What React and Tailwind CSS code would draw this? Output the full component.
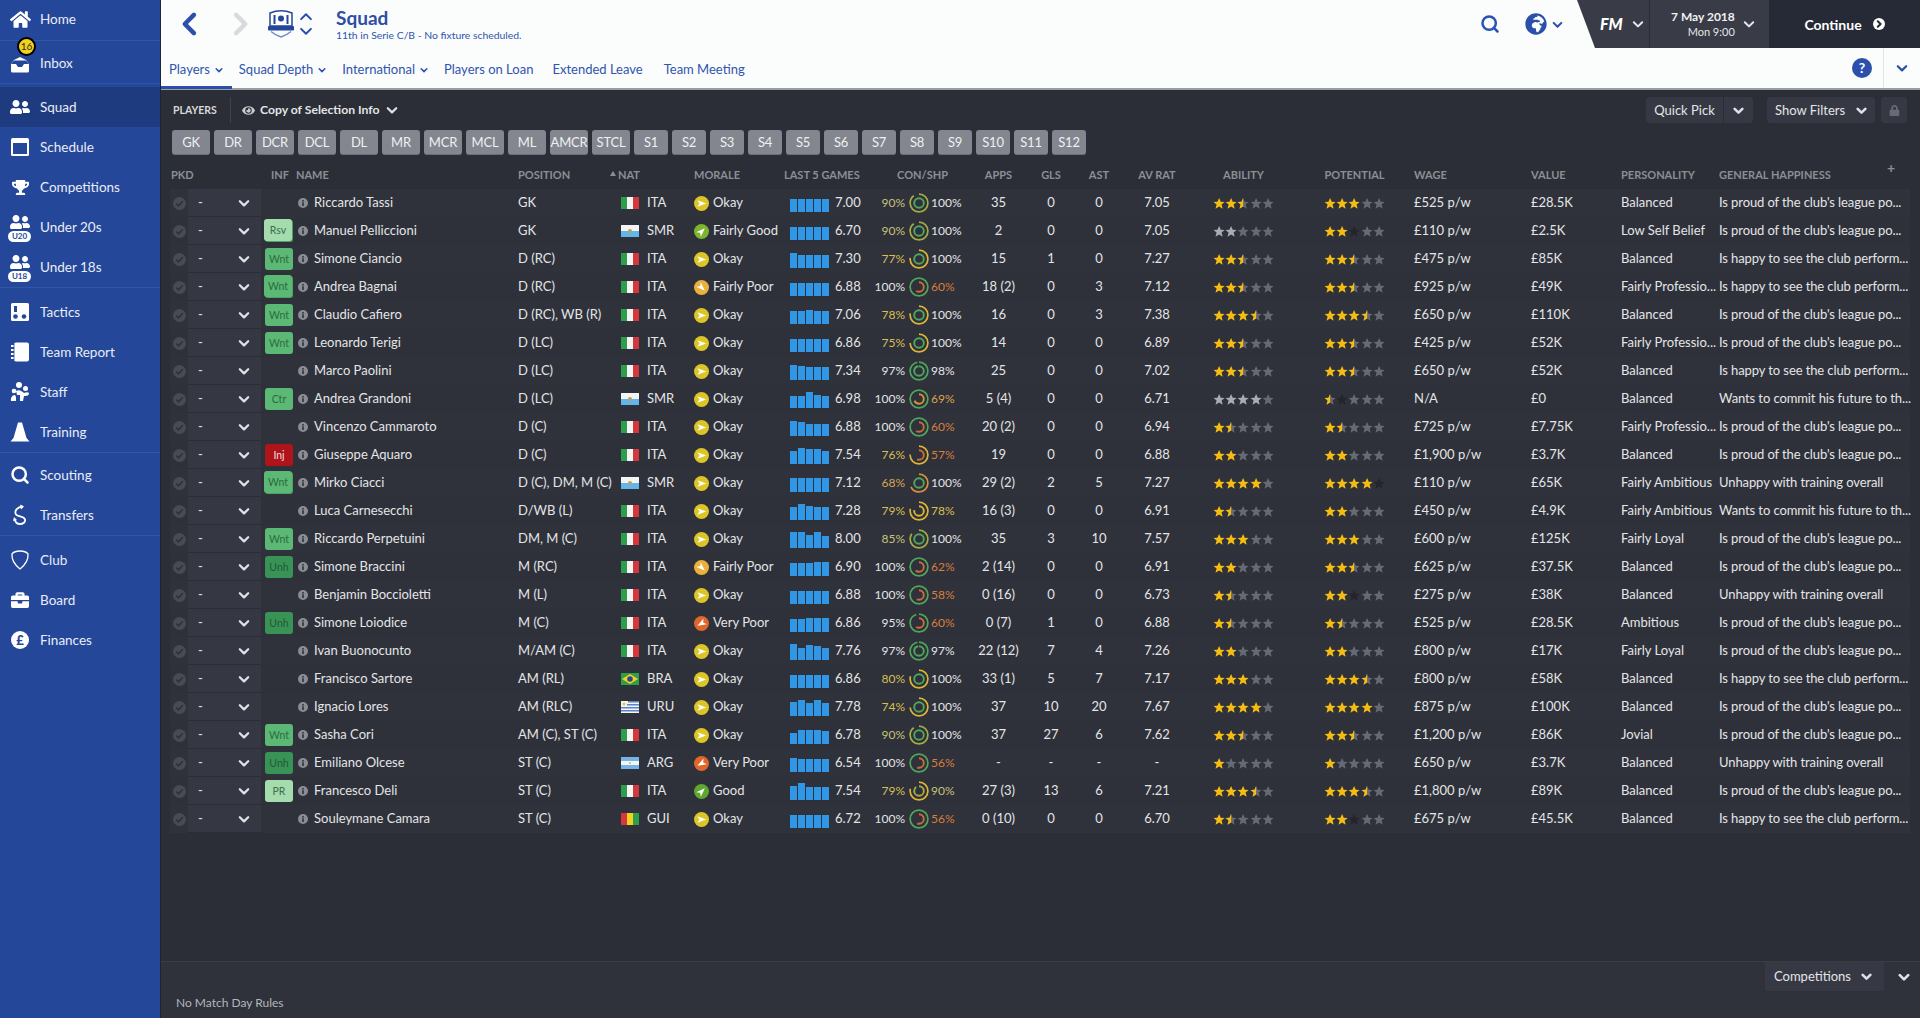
import React from 'react'
import { FaHome, FaUserFriends, FaTrophy, FaBriefcase, FaEye, FaLock, FaGlobeAfrica } from 'react-icons/fa'
import { Search } from 'lucide-react'

const GRID = 'grid grid-cols-[18px_73px_35px_14px_208px_103px_73px_96px_45px_35px_35px_28px_42px_47px_58px_38px_84px_98px_114px_117px_90px_98px_191px]'

const PROUD = "Is proud of the club's league po..."
const HAPPY = 'Is happy to see the club perform...'
const WANTS = 'Wants to commit his future to th...'
const UNHAPPY = 'Unhappy with training overall'
const FP = 'Fairly Professio...'
const FA = 'Fairly Ambitious'

// inf, name, pos, nat, morale, bars, rating, con, shp, apps, gls, ast, avrat, ability, potential, wage, value, personality, happiness
const players = [
  ['', 'Riccardo Tassi', 'GK', 'ITA', 'Okay', [13,13,13,13,13], '7.00', 90, 100, '35', '0', '0', '7.05', { n: 2.5 }, { n: 3 }, '£525 p/w', '£28.5K', 'Balanced', PROUD],
  ['Rsv*', 'Manuel Pelliccioni', 'GK', 'SMR', 'Fairly Good', [13,13,13,13,13], '6.70', 90, 100, '2', '0', '0', '7.05', { n: 2, grey: true }, { n: 2, dark: [2] }, '£110 p/w', '£2.5K', 'Low Self Belief', PROUD],
  ['Wnt', 'Simone Ciancio', 'D (RC)', 'ITA', 'Okay', [15,13,13,13,13], '7.30', 77, 100, '15', '1', '0', '7.27', { n: 2.5 }, { n: 2.5 }, '£475 p/w', '£85K', 'Balanced', HAPPY],
  ['Wnt*', 'Andrea Bagnai', 'D (RC)', 'ITA', 'Fairly Poor', [13,13,13,13,13], '6.88', 100, 60, '18 (2)', '0', '3', '7.12', { n: 2.5 }, { n: 2.5 }, '£925 p/w', '£49K', FP, HAPPY],
  ['Wnt', 'Claudio Cafiero', 'D (RC), WB (R)', 'ITA', 'Okay', [13,13,14,13,13], '7.06', 78, 100, '16', '0', '3', '7.38', { n: 3.5 }, { n: 3.5 }, '£650 p/w', '£110K', 'Balanced', PROUD],
  ['Wnt', 'Leonardo Terigi', 'D (LC)', 'ITA', 'Okay', [13,13,13,13,13], '6.86', 75, 100, '14', '0', '0', '6.89', { n: 2.5 }, { n: 2.5 }, '£425 p/w', '£52K', FP, PROUD],
  ['', 'Marco Paolini', 'D (LC)', 'ITA', 'Okay', [15,14,13,13,13], '7.34', 97, 98, '25', '0', '0', '7.02', { n: 2.5 }, { n: 2.5 }, '£650 p/w', '£52K', 'Balanced', HAPPY],
  ['Ctr', 'Andrea Grandoni', 'D (LC)', 'SMR', 'Okay', [12,12,16,13,12], '6.98', 100, 69, '5 (4)', '0', '0', '6.71', { n: 4, grey: true }, { n: 0.5, dark: [1] }, 'N/A', '£0', 'Balanced', WANTS],
  ['', 'Vincenzo Cammaroto', 'D (C)', 'ITA', 'Okay', [15,14,12,12,12], '6.88', 100, 60, '20 (2)', '0', '0', '6.94', { n: 1.5 }, { n: 1.5 }, '£725 p/w', '£7.75K', FP, PROUD],
  ['Inj', 'Giuseppe Aquaro', 'D (C)', 'ITA', 'Okay', [13,16,15,15,13], '7.54', 76, 57, '19', '0', '0', '6.88', { n: 2 }, { n: 2 }, '£1,900 p/w', '£3.7K', 'Balanced', PROUD],
  ['Wnt*', 'Mirko Ciacci', 'D (C), DM, M (C)', 'SMR', 'Okay', [14,14,14,14,14], '7.12', 68, 100, '29 (2)', '2', '5', '7.27', { n: 4 }, { n: 4, dark: [4] }, '£110 p/w', '£65K', FA, UNHAPPY],
  ['', 'Luca Carnesecchi', 'D/WB (L)', 'ITA', 'Okay', [13,16,14,13,13], '7.28', 79, 78, '16 (3)', '0', '0', '6.91', { n: 1.5 }, { n: 2 }, '£450 p/w', '£4.9K', FA, WANTS],
  ['Wnt', 'Riccardo Perpetuini', 'DM, M (C)', 'ITA', 'Okay', [16,16,13,16,12], '8.00', 85, 100, '35', '3', '10', '7.57', { n: 3 }, { n: 3 }, '£600 p/w', '£125K', 'Fairly Loyal', PROUD],
  ['Unh', 'Simone Braccini', 'M (RC)', 'ITA', 'Fairly Poor', [13,13,13,14,14], '6.90', 100, 62, '2 (14)', '0', '0', '6.91', { n: 2 }, { n: 2.5 }, '£625 p/w', '£37.5K', 'Balanced', PROUD],
  ['', 'Benjamin Boccioletti', 'M (L)', 'ITA', 'Okay', [13,13,13,13,13], '6.88', 100, 58, '0 (16)', '0', '0', '6.73', { n: 1.5 }, { n: 2, dark: [2] }, '£275 p/w', '£38K', 'Balanced', UNHAPPY],
  ['Unh', 'Simone Loiodice', 'M (C)', 'ITA', 'Very Poor', [13,13,14,14,14], '6.86', 95, 60, '0 (7)', '1', '0', '6.88', { n: 1.5 }, { n: 1.5 }, '£525 p/w', '£28.5K', 'Ambitious', PROUD],
  ['', 'Ivan Buonocunto', 'M/AM (C)', 'ITA', 'Okay', [16,12,15,14,12], '7.76', 97, 97, '22 (12)', '7', '4', '7.26', { n: 2 }, { n: 2 }, '£800 p/w', '£17K', 'Fairly Loyal', PROUD],
  ['', 'Francisco Sartore', 'AM (RL)', 'BRA', 'Okay', [13,13,13,13,13], '6.86', 80, 100, '33 (1)', '5', '7', '7.17', { n: 3 }, { n: 3.5 }, '£800 p/w', '£58K', 'Balanced', HAPPY],
  ['', 'Ignacio Lores', 'AM (RLC)', 'URU', 'Okay', [14,16,13,16,13], '7.78', 74, 100, '37', '10', '20', '7.67', { n: 4 }, { n: 4 }, '£875 p/w', '£100K', 'Balanced', PROUD],
  ['Wnt', 'Sasha Cori', 'AM (C), ST (C)', 'ITA', 'Okay', [11,14,14,14,13], '6.78', 90, 100, '37', '27', '6', '7.62', { n: 2.5 }, { n: 2.5 }, '£1,200 p/w', '£86K', 'Jovial', PROUD],
  ['Unh', 'Emiliano Olcese', 'ST (C)', 'ARG', 'Very Poor', [14,13,13,13,13], '6.54', 100, 56, '-', '-', '-', '-', { n: 1 }, { n: 1 }, '£650 p/w', '£3.7K', 'Balanced', UNHAPPY],
  ['PR', 'Francesco Deli', 'ST (C)', 'ITA', 'Good', [14,17,13,13,13], '7.54', 79, 90, '27 (3)', '13', '6', '7.21', { n: 3.5 }, { n: 3.5 }, '£1,800 p/w', '£89K', 'Balanced', PROUD],
  ['', 'Souleymane Camara', 'ST (C)', 'GUI', 'Okay', [13,13,13,13,13], '6.72', 100, 56, '0 (10)', '0', '0', '6.70', { n: 1.5 }, { n: 2, dark: [2] }, '£675 p/w', '£45.5K', 'Balanced', HAPPY],
]

const Chev = ({ size = 11, color = '#dfe0e3', width = 2.6, dir = 'down', className = '' }) => {
  const pts = { down: '3,7 10,14 17,7', up: '3,13 10,6 17,13', left: '13,3 6,10 13,17', right: '7,3 14,10 7,17' }
  return (
    <svg width={size} height={size} viewBox="0 0 20 20" className={className}>
      <polyline points={pts[dir]} fill="none" stroke={color} strokeWidth={width * 20 / size} strokeLinecap="round" strokeLinejoin="round" />
    </svg>
  )
}

const Ico = ({ children }) => (
  <svg width="24" height="24" viewBox="0 0 24 24" fill="white">{children}</svg>
)

const InboxIcon = () => (
  <Ico>
    <path d="M6 9l6-3 6 3 3 4v7a1.500 1.500 0 0 1-1.500 1.500h-15A1.500 1.500 0 0 1 3 20v-7z" />
    <path d="M3 13l5 0 2 3h4l2-3 5 0-3-3.500H6z" fill="#24479a" />
  </Ico>
)
const ScheduleIcon = () => (
  <Ico>
    <rect x="3" y="3" width="18" height="18" rx="1.500" />
    <rect x="5" y="8" width="14" height="11" fill="#24479a" />
  </Ico>
)
const TacticsIcon = () => (
  <Ico>
    <rect x="3" y="3" width="18" height="18" rx="1.500" />
    <path d="M6 6h3v6H6z" fill="#24479a" />
    <circle cx="7.500" cy="16.500" r="2.300" fill="#24479a" />
    <circle cx="16" cy="16.500" r="2.300" fill="#24479a" />
  </Ico>
)
const ReportIcon = () => (
  <Ico>
    <rect x="6" y="2.500" width="15" height="19" rx="2" />
    <path d="M3 6h5M3 10h5M3 14h5M3 18h5" stroke="white" strokeWidth="2" />
    <path d="M6 4v16" stroke="#24479a" strokeWidth="0.800" />
  </Ico>
)
const StaffIcon = () => (
  <Ico>
    <circle cx="11" cy="5" r="3" />
    <circle cx="17.500" cy="8.500" r="2.500" />
    <circle cx="6" cy="11" r="2.300" />
    <path d="M8 11c3-2 6 0 8 2 2-1 4-1 5 0 0 3-3 3-5 3l-1 5h-3v-6H9z" />
    <path d="M3 21c-.5-3 1-6 4-6l1 2v4z" />
  </Ico>
)
const ConeIcon = () => (
  <Ico>
    <path d="M10 2.500h4l4.500 15.500 3 3.500h-19l3-3.500z" />
  </Ico>
)
const TransfersIcon = () => (
  <Ico>
    <path d="M15 3.500C9 4 6 8 8 11.500c1.500 2.500 8 1.500 9 5 .7 2.500-2 4.500-5 4.500-2.500 0-4.500-1.500-5-4" fill="none" stroke="white" strokeWidth="1.800" />
    <path d="M12 1.500l4 2-3 3zM5 18l1-4 3 3z" />
  </Ico>
)
const ClubIcon = () => (
  <Ico>
    <path d="M12 3c3.500 0 6.500 1 8 3 .5 5.500-3 11-8 15C7 17 3.500 11.500 4 6c1.500-2 4.500-3 8-3z" fill="none" stroke="white" strokeWidth="1.300" />
  </Ico>
)

const AgeIcon = ({ label }) => (
  <div className="relative w-[24px] h-[24px] flex justify-center">
    <FaUserFriends size={20} className="text-white -mt-[3px]" />
    <span className="absolute left-[0px] bottom-[-3px] w-[23px] h-[11px] rounded-full bg-white text-[#24479a] text-[8px] font-bold leading-[11px] text-center">{label}</span>
  </div>
)

const navGroups = [
  [['Home', <FaHome size={21} className="text-white" />]],
  [['Inbox', <InboxIcon />, 16]],
  [
    ['Squad', <FaUserFriends size={20} className="text-white" />, null, true],
    ['Schedule', <ScheduleIcon />],
    ['Competitions', <FaTrophy size={17} className="text-white" />],
    ['Under 20s', <AgeIcon label="U20" />],
    ['Under 18s', <AgeIcon label="U18" />],
  ],
  [
    ['Tactics', <TacticsIcon />],
    ['Team Report', <ReportIcon />],
    ['Staff', <StaffIcon />],
    ['Training', <ConeIcon />],
  ],
  [
    ['Scouting', <Search size={20} strokeWidth={3} className="text-white" />],
    ['Transfers', <TransfersIcon />],
  ],
  [
    ['Club', <ClubIcon />],
    ['Board', <FaBriefcase size={18} className="text-white" />],
    ['Finances', <span className="w-[18px] h-[18px] rounded-full bg-white text-[#24479a] text-[13px] font-black leading-[18px] text-center">£</span>],
  ],
]

const groupPad = [
  'border-b border-[#2f55ad]',
  'pt-[2px] border-b border-[#2f55ad]',
  'pt-[3px] border-b border-[#2f55ad]',
  'pt-[4px] border-b border-[#2f55ad]',
  'pt-[2px] border-b border-[#2f55ad]',
  'pt-[4px]',
]

const Sidebar = () => (
  <div className="w-[161px] shrink-0 bg-[#24479a] border-r border-[#1d2433]">
    {navGroups.map((group, i) => (
      <div key={i} className={groupPad[i]}>
        {group.map(([label, icon, badge, active]) => (
          <div key={label} className={`flex items-center h-10 relative ${active ? 'bg-[#1f3b7f]' : ''} ${label === 'Home' ? 'pb-[2px]' : ''}`}>
            <div className="w-[40px] flex justify-center">{icon}</div>
            <span className="text-[13.500px] text-[#e9edf6]">{label}</span>
            {badge && (
              <span className="absolute left-[17px] top-[-6px] w-[19px] h-[19px] rounded-full bg-[#f2d21f] border-[2px] border-black text-[#2a2a10] text-[10px] leading-[15px] text-center">{badge}</span>
            )}
          </div>
        ))}
      </div>
    ))}
  </div>
)

const TeamBadge = () => (
  <svg width="28" height="30" viewBox="0 0 28 30">
    <path d="M3 4c7-3 15-3 22 0v13H3z" fill="white" stroke="#24479a" strokeWidth="1.500" />
    <path d="M7.500 6v9M20.500 6v9" stroke="#24479a" strokeWidth="2" />
    <circle cx="14" cy="9.500" r="3" fill="#24479a" />
    <rect x="1" y="17" width="26" height="4.500" rx="1" fill="#24479a" />
    <path d="M4 22.500c3 2.500 6.500 4.500 10 5.500 3.500-1 7-3 10-5.500" fill="none" stroke="#6e8bcb" strokeWidth="1.500" />
  </svg>
)

const Tab = ({ label, menu }) => (
  <div className="flex items-center gap-[5px] text-[13px] text-[#2f55ae]">
    <span>{label}</span>
    {menu && <Chev size={8} color="#2f55ae" width={1.6} />}
  </div>
)

const Header = () => (
  <div className="h-[90px] shrink-0 bg-[#fbfcfc] border-b-[2px] border-[#9a9da3]">
    <div className="h-[48px] flex">
      <div className="flex-1 flex items-center">
        <div className="w-[42px] flex justify-end"><Chev size={26} color="#2a50ab" width={4.5} dir="left" /></div>
        <div className="w-[50px] flex justify-end"><Chev size={26} color="#d8dadd" width={4.5} dir="right" /></div>
        <div className="ml-[14px]"><TeamBadge /></div>
        <div className="ml-[4px] flex flex-col">
          <Chev size={14} color="#2a50ab" width={2} dir="up" />
          <Chev size={14} color="#2a50ab" width={2} />
        </div>
        <div className="ml-[23px]">
          <div className="text-[19px] font-bold leading-[20px] mt-[1px] text-[#2c4ea5]">Squad</div>
          <div className="text-[10.400px] leading-[14px] text-[#2f55ae]">11th in Serie C/B - No fixture scheduled.</div>
        </div>
        <div className="ml-auto flex items-center mr-[14px]">
          <Search size={20} strokeWidth={3} className="text-[#2a53b5]" />
          <FaGlobeAfrica size={22} className="text-[#2a50ab] ml-[25px]" />
          <Chev size={11} color="#2a50ab" width={2} className="ml-[5px]" />
        </div>
      </div>
      <div className="w-[72px] bg-[#393c47] [clip-path:polygon(0_0,100%_0,100%_100%,18px_100%)] flex items-center pl-[23px] gap-[9px]">
        <span className="text-[16px] font-black italic text-white">FM</span>
        <Chev size={12} color="#e6e7ea" width={2} />
      </div>
      <div className="w-[120px] bg-[#393c47] border-l border-[#2a2d35] flex items-center pl-[21px] gap-[8px]">
        <div className="text-right">
          <div className="text-[12px] font-bold leading-[15px] text-[#f0f0f2]">7 May 2018</div>
          <div className="text-[11px] leading-[15px] text-[#e4e5e7]">Mon 9:00</div>
        </div>
        <Chev size={12} color="#e6e7ea" width={2} />
      </div>
      <div className="w-[151px] bg-[#262a36] flex items-center justify-center gap-[11px]">
        <span className="text-[14px] font-bold text-white">Continue</span>
        <span className="w-[12px] h-[12px] rounded-full bg-white flex items-center justify-center"><Chev size={8} color="#262a36" width={2} dir="right" /></span>
      </div>
    </div>
    <div className="h-[40px] flex items-center relative">
      <div className="w-[71px] h-[3px] bg-[#2a50ab] absolute left-0 bottom-[-1px]"></div>
      <div className="pl-[8px] pt-[3px] flex items-center gap-[19px]">
        <div className="flex items-center gap-[16px] -mr-[3px]">
          <Tab label="Players" menu />
          <Tab label="Squad Depth" menu />
          <Tab label="International" menu />
        </div>
        <Tab label="Players on Loan" />
        <Tab label="Extended Leave" />
        <div className="ml-[2px]"><Tab label="Team Meeting" /></div>
      </div>
      <div className="ml-auto flex items-center h-full">
        <span className="w-[20px] h-[20px] rounded-full bg-[#2a50ab] text-white text-[14px] font-bold leading-[20px] text-center">?</span>
        <div className="w-[1px] h-full bg-[#e3e4e6] ml-[11px]"></div>
        <div className="w-[36px] flex justify-center"><Chev size={12} color="#2a50ab" width={2.2} /></div>
      </div>
    </div>
  </div>
)

const chips = ['GK','DR','DCR','DCL','DL','MR','MCR','MCL','ML','AMCR','STCL','S1','S2','S3','S4','S5','S6','S7','S8','S9','S10','S11','S12']

const Toolbar = () => (
  <div className="h-[40px] pt-[7px] pl-[12px] pr-[13px] flex items-start">
    <span className="text-[10.500px] font-bold leading-[26px] text-[#d5d7da] w-[57px]">PLAYERS</span>
    <div className="w-[1px] h-[26px] bg-[#3f424b]"></div>
    <FaEye size={13} className="text-[#c9cbcf] ml-[11px] mt-[7px]" />
    <span className="text-[12.200px] font-bold leading-[26px] text-[#e4e5e7] ml-[5px]">Copy of Selection Info</span>
    <Chev size={12} color="#dfe0e3" width={2.2} className="ml-[7px] mt-[7px]" />
    <div className="ml-auto flex h-[26px] w-[107px] rounded-sm bg-[#363944] text-[13px] text-[#e4e5e7]">
      <span className="w-[78px] text-center leading-[26px] border-r border-[#2a2d35]">Quick Pick</span>
      <div className="flex-1 flex items-center justify-center"><Chev size={11} /></div>
    </div>
    <div className="ml-[14px] flex items-center justify-between px-[8px] h-[26px] w-[108px] rounded-sm bg-[#363944] text-[13px] leading-[26px] text-[#e4e5e7]">
      <span>Show Filters</span>
      <Chev size={11} />
    </div>
    <div className="ml-[6px] flex items-center justify-center h-[26px] w-[26px] rounded-sm bg-[#363944]">
      <FaLock size={11} className="text-[#686b73]" />
    </div>
  </div>
)

const Chips = () => (
  <div className="pl-[11px] flex gap-[4px] h-[26px]">
    {chips.map((c) => (
      <div key={c} className={`${/^S\d/.test(c) ? 'w-[34px]' : 'w-[38px]'} h-[25px] rounded-[3px] bg-[#83868e] border-b border-[#6b6e76] text-[13px] leading-[24px] text-center text-[#eef0f2] tracking-[-0.2px]`}>{c}</div>
    ))}
  </div>
)

const Flag = ({ nat }) => {
  const stripes = {
    ITA: <><rect width="6" height="12" fill="#2f9e4a" /><rect x="6" width="6" height="12" fill="#f4f4f4" /><rect x="12" width="6" height="12" fill="#d4383c" /></>,
    SMR: <><rect width="18" height="6" fill="#f4f4f4" /><rect y="6" width="18" height="6" fill="#62b6ea" /><circle cx="9" cy="6" r="2" fill="#b8a35e" /></>,
    BRA: <><rect width="18" height="12" fill="#2f9e4a" /><polygon points="9,1 17,6 9,11 1,6" fill="#f2d21f" /><circle cx="9" cy="6" r="2.800" fill="#24479a" /></>,
    URU: <><rect width="18" height="12" fill="#f4f4f4" /><rect y="3" width="18" height="1.500" fill="#5b84c9" /><rect y="6" width="18" height="1.500" fill="#5b84c9" /><rect y="9" width="18" height="1.500" fill="#5b84c9" /><rect y="0" x="7" width="11" height="1.500" fill="#5b84c9" /><rect width="6" height="6" fill="#f4f4f4" /><circle cx="3" cy="3" r="1.500" fill="#e8c83a" /></>,
    ARG: <><rect width="18" height="12" fill="#f4f4f4" /><rect width="18" height="4" fill="#74b4e6" /><rect y="8" width="18" height="4" fill="#74b4e6" /><circle cx="9" cy="6" r="1" fill="#d9b33a" /></>,
    GUI: <><rect width="6" height="12" fill="#d4383c" /><rect x="6" width="6" height="12" fill="#f2d21f" /><rect x="12" width="6" height="12" fill="#2f9e4a" /></>,
  }
  return <svg width="18" height="12" viewBox="0 0 18 12">{stripes[nat]}</svg>
}

const moraleStyle = {
  Okay: ['#dcc627', 0],
  'Fairly Good': ['#7db52f', -45],
  Good: ['#5fa82f', -45],
  'Fairly Poor': ['#eab03a', 45],
  'Very Poor': ['#e0672c', 150],
}

const MoraleIcon = ({ morale }) => {
  const [fill, rot] = moraleStyle[morale]
  return (
    <svg width="15" height="15" viewBox="0 0 16 16">
      <circle cx="8" cy="8" r="8" fill={fill} />
      <polygon points="3.500,4.500 13,8 3.500,11.500 6,8" fill="white" transform={`rotate(${rot} 8 8)`} />
    </svg>
  )
}

const ringColor = (p) => {
  if (p >= 95) return '#4fa65c'
  if (p >= 85) return '#a5ab45'
  if (p >= 74) return '#dcb437'
  if (p >= 64) return '#d9903a'
  return '#cf6a3a'
}

const pctClass = (p) => {
  if (p >= 95) return 'text-[#e4e5e7]'
  if (p >= 85) return 'text-[#c7c27a]'
  if (p >= 74) return 'text-[#d9bf52]'
  if (p >= 64) return 'text-[#d9a450]'
  return 'text-[#d87f3c]'
}

const Ring = ({ con, shp }) => (
  <svg width="20" height="20" viewBox="0 0 20 20" className="-rotate-90">
    <circle cx="10" cy="10" r="8.900" fill="none" stroke={ringColor(con)} strokeWidth="1.700" pathLength="100" strokeDasharray={`${con} 100`} />
    <circle cx="10" cy="10" r="4.800" fill="none" stroke={ringColor(shp)} strokeWidth="1.900" pathLength="100" strokeDasharray={`${shp} 100`} />
  </svg>
)

const STAR = '12,2 15,9 22,9.500 16.500,14 18.500,21.500 12,17.500 5.500,21.500 7.500,14 2,9.500 9,9'
const HALF = '12,2 9,9 2,9.500 7.500,14 5.500,21.500 12,17.500'

const Stars = ({ n, grey, dark = [] }) => (
  <div className="flex w-[61px]">
    {[0, 1, 2, 3, 4].map((i) => {
      const on = grey ? '#a9acb2' : '#f5bd12'
      const base = dark.includes(i) ? '#23252b' : '#666a74'
      return (
        <svg key={i} width="12.200" height="13" viewBox="1 1 22 22">
          <polygon points={STAR} fill={n >= i + 1 ? on : base} />
          {n === i + 0.5 && <polygon points={HALF} fill={on} />}
        </svg>
      )
    })}
  </div>
)

const Badge = ({ code }) => {
  if (!code) return <div />
  const stacked = code.endsWith('*')
  const label = code.replace('*', '')
  const tone = {
    Wnt: 'bg-[#5bb975] text-[#2d6a41]',
    Ctr: 'bg-[#5bb975] text-[#2d6a41]',
    Rsv: 'bg-[#a4dcae] text-[#3e6c4a]',
    PR: 'bg-[#a4dcae] text-[#3e6c4a]',
    Unh: 'bg-[#3a9356] text-[#1f5a35]',
    Inj: 'bg-[#b0141b] text-[#f3dede]',
  }[label]
  return (
    <div className="pl-[4px]">
      <div className={`w-[28px] h-[22px] rounded-[3px] text-[10.500px] leading-[22px] text-center ${tone} ${stacked ? '-translate-x-[1px] -translate-y-[1px] shadow-[1px_1px_0_#4aa563]' : ''}`}>{label}</div>
    </div>
  )
}

const Row = ({ p, i }) => {
  const [inf, name, pos, nat, morale, bars, rating, con, shp, apps, gls, ast, avrat, ability, potential, wage, value, personality, happiness] = p
  return (
    <div className={`${GRID} h-[28px] items-center text-[13px] text-[#e4e5e7] ${i % 2 ? 'bg-[#2e3139]' : 'bg-[#2f323b]'}`}>
      <div className="h-full flex items-center justify-center">
        <svg width="13" height="13" viewBox="0 0 14 14">
          <circle cx="7" cy="7" r="7" fill="#484b53" />
          <polyline points="3.500,7 6,9.500 10.500,4.500" fill="none" stroke="#2e3139" strokeWidth="1.600" />
        </svg>
      </div>
      <div className="h-full bg-[#353842] border-b border-[#2a2d35] flex items-center justify-between pl-[10px] pr-[11px]">
        <span>-</span>
        <Chev size={12} color="#e2e3e6" width={2.2} />
      </div>
      <Badge code={inf} />
      <svg width="10" height="10" viewBox="0 0 10 10" className="justify-self-center">
        <circle cx="5" cy="5" r="5" fill="#8a8d93" />
        <rect x="4.200" y="4.200" width="1.600" height="3.800" fill="#2f323b" />
        <rect x="4.200" y="2" width="1.600" height="1.500" fill="#2f323b" />
      </svg>
      <div className="pl-[4px]">{name}</div>
      <div>{pos}</div>
      <div className="flex items-center gap-[8px]"><Flag nat={nat} /><span>{nat}</span></div>
      <div className="flex items-center gap-[4px]"><MoraleIcon morale={morale} /><span>{morale}</span></div>
      <div className="flex items-end gap-[1.500px] h-[17px]">
        {bars.map((h, k) => <div key={k} className="w-[6.600px] bg-[#2f97e6]" style={{ height: h }} />)}
      </div>
      <div>{rating}</div>
      <div className={`text-right text-[12px] ${pctClass(con)}`}>{con}%</div>
      <div className="flex justify-center"><Ring con={con} shp={shp} /></div>
      <div className={`text-[12px] -ml-[2px] ${pctClass(shp)}`}>{shp}%</div>
      <div className="text-center">{apps}</div>
      <div className="text-center">{gls}</div>
      <div className="text-center">{ast}</div>
      <div className="text-center pr-[6px]">{avrat}</div>
      <div className="pl-[11px]"><Stars {...ability} /></div>
      <div className="pl-[24px]"><Stars {...potential} /></div>
      <div>{wage}</div>
      <div>{value}</div>
      <div className="whitespace-nowrap">{personality}</div>
      <div className="whitespace-nowrap tracking-[-0.1px]">{happiness}</div>
    </div>
  )
}

const TableHead = () => (
  <div className={`${GRID} h-[33px] pt-[5px] items-center text-[11px] font-bold text-[#8b8e95] whitespace-nowrap`}>
    <div className="col-span-2 pl-[1px]">PKD</div>
    <div className="pl-[10px]">INF</div>
    <div className="col-span-2">NAME</div>
    <div>POSITION</div>
    <div className="relative">
      <span className="absolute left-[-11px] top-[4px] w-0 h-0 border-x-[3px] border-x-transparent border-b-[5px] border-b-[#8b8e95]"></span>
      <span className="-ml-[3px]">NAT</span>
    </div>
    <div>MORALE</div>
    <div className="col-span-2 -ml-[6px]">LAST 5 GAMES</div>
    <div className="col-span-3 text-center">CON/SHP</div>
    <div className="text-center">APPS</div>
    <div className="text-center">GLS</div>
    <div className="text-center">AST</div>
    <div className="text-center pr-[6px]">AV RAT</div>
    <div className="pl-[11px]"><div className="w-[61px] text-center">ABILITY</div></div>
    <div className="pl-[24px]"><div className="w-[61px] text-center">POTENTIAL</div></div>
    <div>WAGE</div>
    <div>VALUE</div>
    <div>PERSONALITY</div>
    <div className="flex justify-between pr-[15px]"><span>GENERAL HAPPINESS</span><span className="text-[14px] leading-[12px] -mt-[5px]">+</span></div>
  </div>
)

const Footer = () => (
  <div className="mt-auto h-[57px] border-t border-[#3a3d46] bg-[#2f323a]">
    <div className="flex justify-end pr-[3px]">
      <div className="w-[119px] h-[29px] bg-[#363944] flex items-center justify-between pl-[9px] pr-[12px] text-[13px] text-[#e4e5e7]">
        <span>Competitions</span>
        <Chev size={11} />
      </div>
      <div className="w-[26px] ml-[7px] h-[29px] flex items-center justify-center"><Chev size={12} color="#e2e3e6" /></div>
    </div>
    <div className="pl-[15px] mt-[3px] text-[12px] text-[#b4b6bb]">No Match Day Rules</div>
  </div>
)

const App = () => {
  return (
    <div className="w-[1920px] h-[1018px] flex overflow-hidden bg-[#2b2e36] [font-family:Lato,sans-serif]">
      <Sidebar />
      <div className="flex-1 flex flex-col min-w-0">
        <Header />
        <div className="flex-1 flex flex-col min-h-0">
          <Toolbar />
          <Chips />
          <div className="pl-[9px] pr-[10px]">
            <TableHead />
            {players.map((p, i) => <Row key={p[1]} p={p} i={i} />)}
          </div>
          <Footer />
        </div>
      </div>
    </div>
  )
}

export default App
